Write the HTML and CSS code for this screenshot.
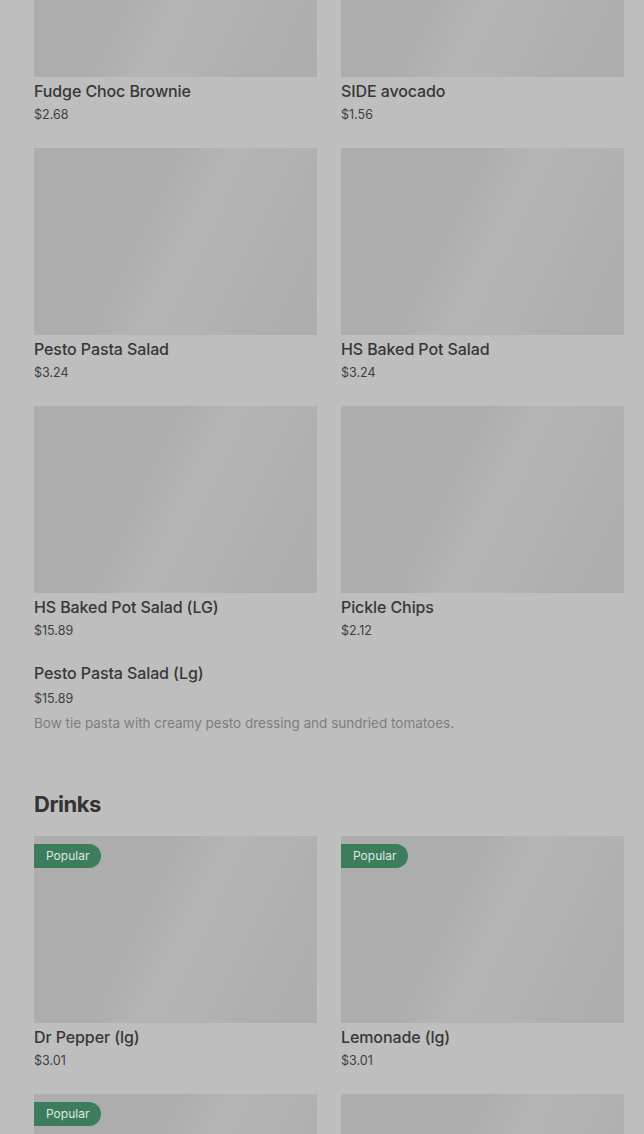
FILE: index.html
```html
<!DOCTYPE html>
<html>
<head>
<meta charset="utf-8">
<link rel="stylesheet" href="styles.css">
</head>
<body>
<main class="menu">
  <section class="section first">
    <div class="grid">
      <div class="card"><div class="img"></div><div class="title">Fudge Choc Brownie</div><div class="price">$2.68</div></div>
      <div class="card"><div class="img"></div><div class="title">SIDE avocado</div><div class="price">$1.56</div></div>
      <div class="card"><div class="img"></div><div class="title">Pesto Pasta Salad</div><div class="price">$3.24</div></div>
      <div class="card"><div class="img"></div><div class="title">HS Baked Pot Salad</div><div class="price">$3.24</div></div>
      <div class="card"><div class="img"></div><div class="title">HS Baked Pot Salad (LG)</div><div class="price">$15.89</div></div>
      <div class="card"><div class="img"></div><div class="title">Pickle Chips</div><div class="price">$2.12</div></div>
      <div class="card wide"><div class="title">Pesto Pasta Salad (Lg)</div><div class="price">$15.89</div><div class="desc">Bow tie pasta with creamy pesto dressing and sundried tomatoes.</div></div>
    </div>
  </section>
  <section class="section">
    <h2 class="heading">Drinks</h2>
    <div class="grid">
      <div class="card"><div class="img"><span class="badge">Popular</span></div><div class="title">Dr Pepper (lg)</div><div class="price">$3.01</div></div>
      <div class="card"><div class="img"><span class="badge">Popular</span></div><div class="title">Lemonade (lg)</div><div class="price">$3.01</div></div>
      <div class="card"><div class="img"><span class="badge">Popular</span></div></div>
      <div class="card"><div class="img"></div></div>
    </div>
  </section>
</main>
</body>
</html>
```
FILE: styles.css
```css
html, body {
  margin: 0;
  padding: 0;
  background: #bebebe;
  height: 1134px;
  overflow: hidden;
}
body {
  font-family: Inter, "Noto Sans", sans-serif;
  color: #383838;
}
.menu {
  padding: 0 20px 0 34px;
}
.section.first {
  margin-top: -110px;
}
.grid {
  display: grid;
  grid-template-columns: 283px 283px;
  column-gap: 24px;
  row-gap: 23px;
}
.card {
  display: flex;
  flex-direction: column;
}
.card.wide {
  grid-column: 1 / -1;
  margin-top: -1px;
}
.img {
  position: relative;
  height: 187px;
  background: linear-gradient(116deg, #adadad 0%, #adadad 38%, #b4b4b4 52%, #b3b3b3 66%, #afafaf 80%, #adadad 100%);
}
.badge {
  position: absolute;
  left: 0;
  top: 8px;
  height: 24px;
  line-height: 24px;
  padding: 0 12px;
  border-radius: 0 12px 12px 0;
  background: #3e7d5c;
  color: #dfe9e3;
  font-size: 12px;
}
.title {
  margin-top: 4px;
  font-size: 16px;
  line-height: 20px;
  font-weight: 500;
  letter-spacing: -0.1px;
  color: #373737;
}
.card.wide .title { margin-top: 0; }
.price {
  margin-top: 4px;
  font-size: 12.5px;
  line-height: 20px;
  color: #3e3e3e;
}
.card.wide .price { margin-top: 6px; }
.desc {
  margin-top: 4px;
  font-size: 13.5px;
  line-height: 20px;
  color: #7d7d7d;
}
.heading {
  margin: 55px 0 16px;
  font-size: 22px;
  line-height: 32px;
  font-weight: 700;
  letter-spacing: -0.5px;
  color: #333;
}
```
